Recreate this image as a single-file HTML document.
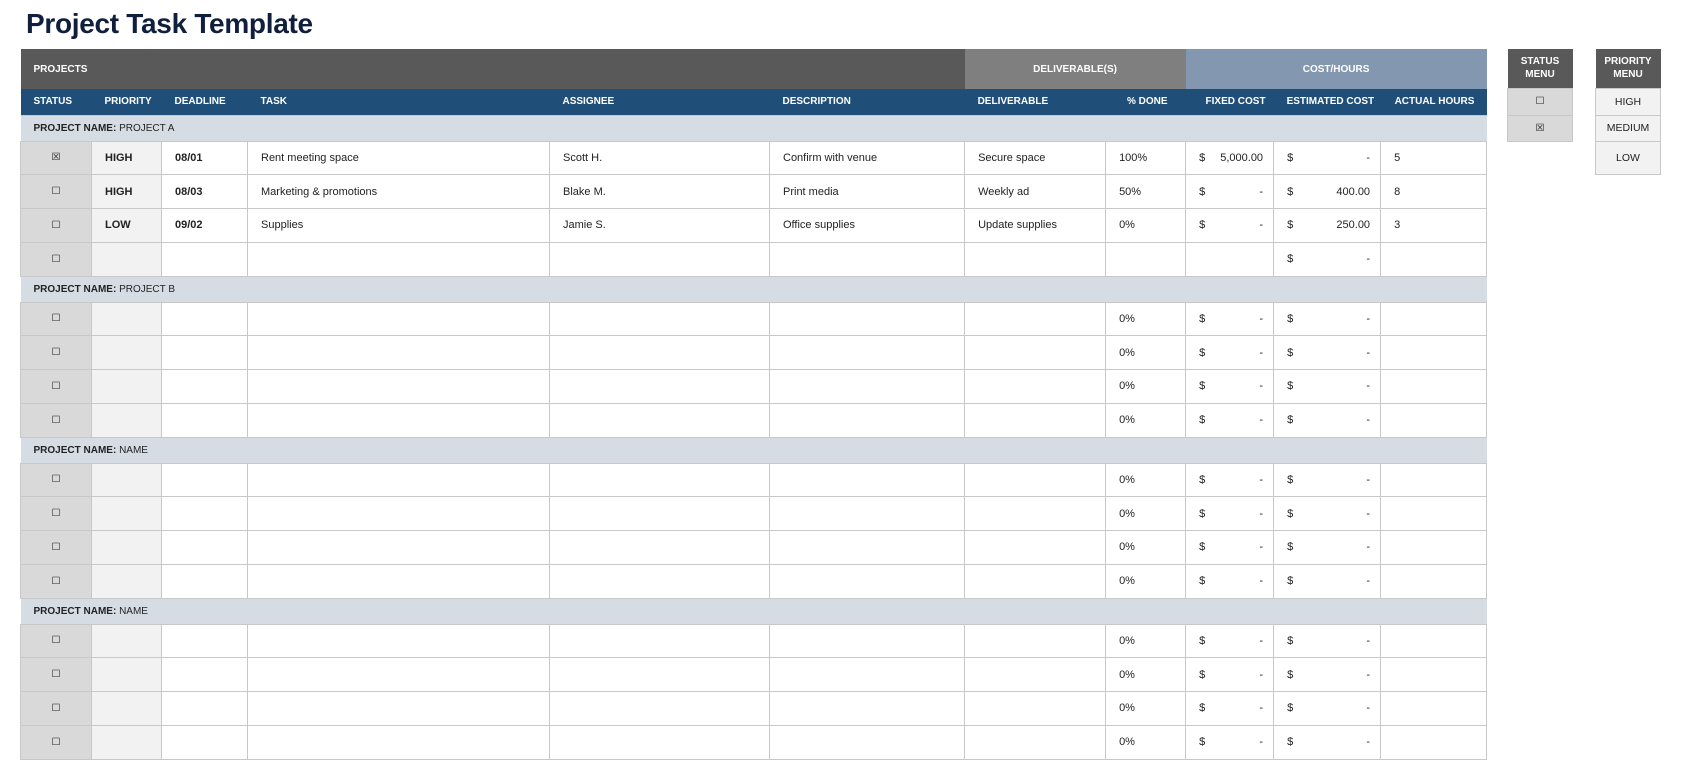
<!DOCTYPE html>
<html><head><meta charset="utf-8">
<style>
*{box-sizing:border-box;margin:0;padding:0}
body{width:1684px;height:783px;background:#fff;font-family:"Liberation Sans",sans-serif;color:#222;position:relative;overflow:hidden}
h1{position:absolute;left:26px;top:8px;font-size:28px;font-weight:bold;color:#0f1f3d;letter-spacing:-0.3px}
table{position:absolute;border-collapse:collapse;table-layout:fixed}
#main{left:20px;top:49px;width:1466px}
td{font-size:11px;white-space:nowrap;overflow:hidden;border:1px solid #c8c8c8;padding:0 0 0 13px}
.h1 td{height:40px;color:#fff;font-weight:bold;font-size:10px;border:none}
.h2 td{height:26px;background:#1f4e79;color:#fff;font-weight:bold;font-size:10px;border:none;border-bottom:1px solid #c8c8c8}
.band td{height:26px;background:#d6dce4;font-size:10px;border-left:none;border-right:none}
.r td{height:33.75px}
.s{background:#d9d9d9;text-align:center;padding:0;font-size:10px!important}
.p{background:#f2f2f2;font-weight:bold}
.d{font-weight:bold}
.m{display:flex;justify-content:space-between;padding-right:10px}
.menu td{text-align:center;padding:0;border:1px solid #c8c8c8;font-size:10.5px}
.mh td{background:#595959;color:#fff;font-weight:bold;height:39px;line-height:13px;border:none;font-size:10px}
</style></head><body>
<h1>Project Task Template</h1>
<table id="main">
<colgroup><col style="width:71px"><col style="width:70px"><col style="width:86px"><col style="width:302px"><col style="width:220px"><col style="width:195px"><col style="width:141px"><col style="width:80px"><col style="width:88px"><col style="width:107px"><col style="width:106px"></colgroup>
<tr class="h1"><td colspan="6" style="background:#595959">PROJECTS</td><td colspan="2" style="background:#7f7f7f;text-align:center;padding:0">DELIVERABLE(S)</td><td colspan="3" style="background:#8497b0;text-align:center;padding:0">COST/HOURS</td></tr>
<tr class="h2"><td>STATUS</td><td>PRIORITY</td><td>DEADLINE</td><td>TASK</td><td>ASSIGNEE</td><td>DESCRIPTION</td><td>DELIVERABLE</td><td style="text-align:right;padding-right:18px">% DONE</td><td style="text-align:right;padding-right:8px">FIXED COST</td><td style="text-align:right;padding-right:8px">ESTIMATED COST</td><td style="padding-left:14px">ACTUAL HOURS</td></tr>
<tr class="band"><td colspan="11"><b>PROJECT NAME:</b> PROJECT A</td></tr>
<tr class="r"><td class="s">☒</td><td class="p">HIGH</td><td class="d">08/01</td><td>Rent meeting space</td><td>Scott H.</td><td>Confirm with venue</td><td>Secure space</td><td>100%</td><td><div class="m"><span>$</span><span>5,000.00</span></div></td><td><div class="m"><span>$</span><span>-</span></div></td><td>5</td></tr>
<tr class="r"><td class="s">☐</td><td class="p">HIGH</td><td class="d">08/03</td><td>Marketing &amp; promotions</td><td>Blake M.</td><td>Print media</td><td>Weekly ad</td><td>50%</td><td><div class="m"><span>$</span><span>-</span></div></td><td><div class="m"><span>$</span><span>400.00</span></div></td><td>8</td></tr>
<tr class="r"><td class="s">☐</td><td class="p">LOW</td><td class="d">09/02</td><td>Supplies</td><td>Jamie S.</td><td>Office supplies</td><td>Update supplies</td><td>0%</td><td><div class="m"><span>$</span><span>-</span></div></td><td><div class="m"><span>$</span><span>250.00</span></div></td><td>3</td></tr>
<tr class="r"><td class="s">☐</td><td class="p"></td><td></td><td></td><td></td><td></td><td></td><td></td><td></td><td><div class="m"><span>$</span><span>-</span></div></td><td></td></tr>
<tr class="band"><td colspan="11"><b>PROJECT NAME:</b> PROJECT B</td></tr>
<tr class="r"><td class="s">☐</td><td class="p"></td><td></td><td></td><td></td><td></td><td></td><td>0%</td><td><div class="m"><span>$</span><span>-</span></div></td><td><div class="m"><span>$</span><span>-</span></div></td><td></td></tr>
<tr class="r"><td class="s">☐</td><td class="p"></td><td></td><td></td><td></td><td></td><td></td><td>0%</td><td><div class="m"><span>$</span><span>-</span></div></td><td><div class="m"><span>$</span><span>-</span></div></td><td></td></tr>
<tr class="r"><td class="s">☐</td><td class="p"></td><td></td><td></td><td></td><td></td><td></td><td>0%</td><td><div class="m"><span>$</span><span>-</span></div></td><td><div class="m"><span>$</span><span>-</span></div></td><td></td></tr>
<tr class="r"><td class="s">☐</td><td class="p"></td><td></td><td></td><td></td><td></td><td></td><td>0%</td><td><div class="m"><span>$</span><span>-</span></div></td><td><div class="m"><span>$</span><span>-</span></div></td><td></td></tr>
<tr class="band"><td colspan="11"><b>PROJECT NAME:</b> NAME</td></tr>
<tr class="r"><td class="s">☐</td><td class="p"></td><td></td><td></td><td></td><td></td><td></td><td>0%</td><td><div class="m"><span>$</span><span>-</span></div></td><td><div class="m"><span>$</span><span>-</span></div></td><td></td></tr>
<tr class="r"><td class="s">☐</td><td class="p"></td><td></td><td></td><td></td><td></td><td></td><td>0%</td><td><div class="m"><span>$</span><span>-</span></div></td><td><div class="m"><span>$</span><span>-</span></div></td><td></td></tr>
<tr class="r"><td class="s">☐</td><td class="p"></td><td></td><td></td><td></td><td></td><td></td><td>0%</td><td><div class="m"><span>$</span><span>-</span></div></td><td><div class="m"><span>$</span><span>-</span></div></td><td></td></tr>
<tr class="r"><td class="s">☐</td><td class="p"></td><td></td><td></td><td></td><td></td><td></td><td>0%</td><td><div class="m"><span>$</span><span>-</span></div></td><td><div class="m"><span>$</span><span>-</span></div></td><td></td></tr>
<tr class="band"><td colspan="11"><b>PROJECT NAME:</b> NAME</td></tr>
<tr class="r"><td class="s">☐</td><td class="p"></td><td></td><td></td><td></td><td></td><td></td><td>0%</td><td><div class="m"><span>$</span><span>-</span></div></td><td><div class="m"><span>$</span><span>-</span></div></td><td></td></tr>
<tr class="r"><td class="s">☐</td><td class="p"></td><td></td><td></td><td></td><td></td><td></td><td>0%</td><td><div class="m"><span>$</span><span>-</span></div></td><td><div class="m"><span>$</span><span>-</span></div></td><td></td></tr>
<tr class="r"><td class="s">☐</td><td class="p"></td><td></td><td></td><td></td><td></td><td></td><td>0%</td><td><div class="m"><span>$</span><span>-</span></div></td><td><div class="m"><span>$</span><span>-</span></div></td><td></td></tr>
<tr class="r"><td class="s">☐</td><td class="p"></td><td></td><td></td><td></td><td></td><td></td><td>0%</td><td><div class="m"><span>$</span><span>-</span></div></td><td><div class="m"><span>$</span><span>-</span></div></td><td></td></tr>
</table>
<table class="menu" style="left:1507px;top:49px;width:66px">
<tr class="mh"><td>STATUS<br>MENU</td></tr>
<tr><td style="background:#d9d9d9;height:27px;font-size:10px">☐</td></tr>
<tr><td style="background:#d9d9d9;height:26px;font-size:10px">☒</td></tr>
</table>
<table class="menu" style="left:1595px;top:49px;width:66px">
<tr class="mh"><td>PRIORITY<br>MENU</td></tr>
<tr><td style="background:#f2f2f2;height:27px">HIGH</td></tr>
<tr><td style="background:#f2f2f2;height:26px">MEDIUM</td></tr>
<tr><td style="background:#f2f2f2;height:33px">LOW</td></tr>
</table>
</body></html>
